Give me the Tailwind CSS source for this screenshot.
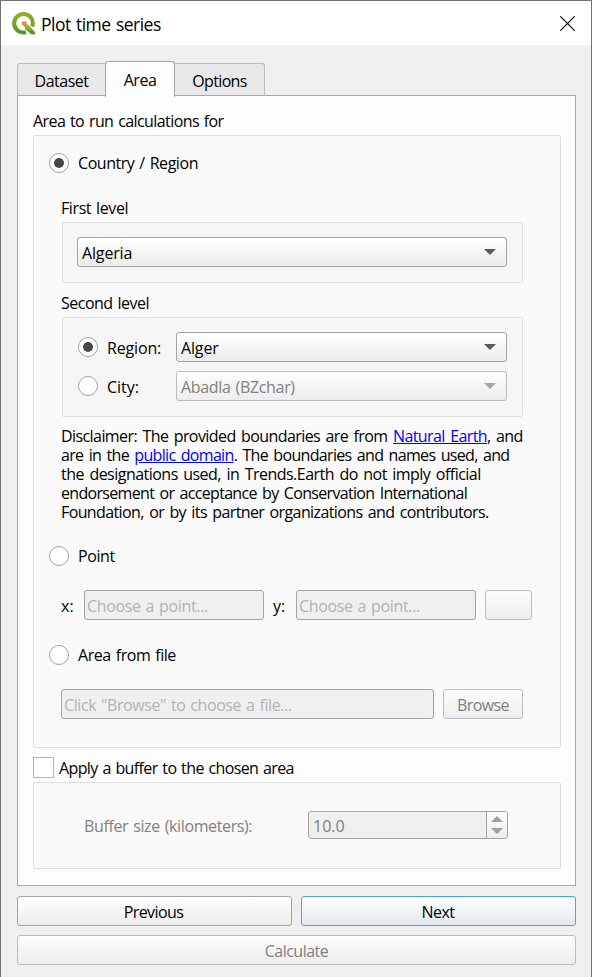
<!DOCTYPE html>
<html lang="en">
<head>
<meta charset="utf-8">
<title>Plot time series</title>
<script src="https://cdn.jsdelivr.net/npm/@tailwindcss/browser@4"></script>
</head>
<body class="h-[977px] w-[592px] overflow-hidden">
<div class="flex h-[977px] w-[592px] flex-col border-x border-t border-[#707070] bg-[#efefef] font-['Open_Sans',sans-serif] text-[16px] leading-[20px] tracking-[-0.5px] text-black [word-spacing:1.2px]">
  <header class="flex h-[44px] shrink-0 items-center bg-white pl-[11px] pr-[16px]">
    <svg class="h-[23px] w-[23px]" viewBox="0 0 23 23">
      <defs><linearGradient id="g" x1="0" y1="0" x2="0" y2="1"><stop offset="0" stop-color="#93b023"/><stop offset="1" stop-color="#589632"/></linearGradient></defs>
      <path d="M14 20.200A9.300 9.300 0 1 1 20.200 14.500" fill="none" stroke="url(#g)" stroke-width="4"/>
      <path d="M13 14l3.500-.5 6.500 6.500V22.500h-3.500L13 17z" fill="#589632"/>
      <path d="M13.500 13.500l3 0 3.500 3.500-2.500 2L13 16z" fill="#93b023"/>
      <path d="M10 9.500h4l.5 1.500 1.500 2-2.500 2.500-3.500-3z" fill="#ee8a33"/>
    </svg>
    <h1 class="ml-[6px] mt-[2px] text-[17.5px] font-normal tracking-[-0.5px]">Plot time series</h1>
    <svg class="ml-auto h-[15px] w-[15px]" viewBox="0 0 15 15"><path d="M.3.3l14.400 14.400M14.700.3L.3 14.700" stroke="#000" stroke-width="1.100"/></svg>
  </header>

  <nav class="relative z-10 -mb-px ml-4 mt-4 flex h-[36px] shrink-0 items-end">
    <div class="mb-px flex h-[33px] w-[88px] items-center justify-center rounded-tl-[3px] border border-r-0 border-[#bdbdbd] border-b-[#a8a8a8] bg-[#e8e8e8] pt-[3px]">Dataset</div>
    <div class="flex h-[36px] w-[70px] items-center justify-center rounded-t-[3px] border border-b-0 border-[#a8a8a8] bg-[#fdfdfd] pt-px">Area</div>
    <div class="mb-px flex h-[33px] w-[90px] items-center justify-center rounded-tr-[3px] border border-l-0 border-[#bdbdbd] border-b-[#a8a8a8] bg-[#e8e8e8] pt-[3px] tracking-[-0.65px]">Options</div>
  </nav>

  <main class="-mt-px ml-4 flex h-[791px] w-[559px] shrink-0 flex-col border border-[#a8a8a8] bg-[#fdfdfd] pl-[15px] pt-[15px]">
    <h2 class="h-[24px] tracking-[-0.58px]">Area to run calculations for</h2>
    <section class="h-[613px] w-[528px] shrink-0 rounded-[2px] border border-[#dedede] bg-[#fafafa]">
      <div class="mt-[17px] flex h-[20px] items-center pl-[15px]">
        <i class="flex size-[20px] items-center justify-center rounded-full border border-[#a3a3a3] bg-white"><b class="size-[10px] rounded-full bg-[#484848]"></b></i>
        <span class="ml-[9px] tracking-[-0.45px]">Country / Region</span>
      </div>
      <div class="ml-[27px] mt-[25px] h-[24px] tracking-[-0.4px]">First level</div>
      <div class="ml-[28px] h-[61px] w-[461px] rounded-[2px] border border-[#dedede] bg-[#f6f6f6] p-[14px]">
        <div class="flex h-[30px] w-[430px] items-center justify-between rounded-[3px] border border-[#a3a3a3] bg-linear-to-b from-white to-[#ececec] pl-[4px] pr-[10px] pt-[2px] tracking-[-0.15px]"><span>Algeria</span><svg class="mb-[3px] h-[6px] w-[12px]" viewBox="0 0 12 6"><path d="M0 0h12L6 6z" fill="#5c5c5c"/></svg></div>
      </div>
      <div class="ml-[27px] mt-[10px] h-[24px]">Second level</div>
      <div class="ml-[28px] h-[100px] w-[461px] rounded-[2px] border border-[#dedede] bg-[#f6f6f6] pl-[15px] pt-[14px]">
        <div class="flex h-[30px] items-center">
          <i class="flex size-[20px] items-center justify-center rounded-full border border-[#a3a3a3] bg-white"><b class="size-[10px] rounded-full bg-[#484848]"></b></i>
          <span class="ml-[9px] mt-[2px] w-[69px] tracking-[-0.15px]">Region:</span>
          <div class="flex h-[30px] w-[331px] items-center justify-between rounded-[3px] border border-[#a3a3a3] bg-linear-to-b from-white to-[#ececec] pl-[4px] pr-[10px] pt-[2px] tracking-[-0.15px]"><span>Alger</span><svg class="mb-[3px] h-[6px] w-[12px]" viewBox="0 0 12 6"><path d="M0 0h12L6 6z" fill="#5c5c5c"/></svg></div>
        </div>
        <div class="mt-[9px] flex h-[30px] items-center">
          <i class="size-[20px] rounded-full border border-[#a3a3a3] bg-white"></i>
          <span class="ml-[9px] mt-[2px] w-[69px] tracking-normal">City:</span>
          <div class="flex h-[30px] w-[331px] items-center justify-between rounded-[3px] border border-[#bdbdbd] bg-linear-to-b from-[#fdfdfd] to-[#ededed] pl-[4px] pr-[10px] pt-[2px] tracking-[-0.33px] text-[#808080]"><span>Abadla (BZchar)</span><svg class="mb-[3px] h-[6px] w-[12px]" viewBox="0 0 12 6"><path d="M0 0h12L6 6z" fill="#a5a5a5"/></svg></div>
        </div>
      </div>
      <div class="ml-[27px] mt-[10px] h-[95px] whitespace-nowrap leading-[19px] [word-spacing:1.8px]">
        <p class="tracking-[-0.58px]">Disclaimer: The provided boundaries are from <a class="text-[#0000ff] underline">Natural Earth</a>, and</p>
        <p class="tracking-[-0.67px]">are in the <a class="text-[#0000ff] underline">public domain</a>. The boundaries and names used, and</p>
        <p class="tracking-[-0.52px]">the designations used, in Trends.Earth do not imply official</p>
        <p class="tracking-[-0.68px]">endorsement or acceptance by Conservation International</p>
        <p class="tracking-[-0.61px]">Foundation, or by its partner organizations and contributors.</p>
      </div>
      <div class="mt-[24px] flex h-[20px] items-center pl-[15px]">
        <i class="size-[20px] rounded-full border border-[#a3a3a3] bg-white"></i><span class="ml-[9px] tracking-[-0.4px]">Point</span>
      </div>
      <div class="mt-[24px] flex h-[30px] items-center pl-[27px] tracking-[-0.36px]">
        <span class="mt-[2px] w-[23px] tracking-normal">x:</span>
        <div class="h-[30px] w-[180px] rounded-[3px] border border-[#a3a3a3] bg-[#efefef] pl-[2px] pt-[5px] text-[#b3b3b3]">Choose a point...</div>
        <span class="ml-[9px] mt-[2px] w-[23px] tracking-normal">y:</span>
        <div class="h-[30px] w-[180px] rounded-[3px] border border-[#a3a3a3] bg-[#efefef] pl-[2px] pt-[5px] text-[#b3b3b3]">Choose a point...</div>
        <div class="ml-[9px] h-[30px] w-[47px] rounded-[3px] border border-[#bdbdbd] bg-linear-to-b from-[#fdfdfd] to-[#ededed]"></div>
      </div>
      <div class="mt-[25px] flex h-[20px] items-center pl-[15px]">
        <i class="size-[20px] rounded-full border border-[#a3a3a3] bg-white"></i><span class="ml-[9px] tracking-[-0.44px]">Area from file</span>
      </div>
      <div class="mt-[24px] flex h-[30px] pl-[27px]">
        <div class="h-[30px] w-[373px] rounded-[3px] border border-[#a3a3a3] bg-[#efefef] pl-[2px] pt-[5px] tracking-[-0.42px] text-[#b3b3b3]">Click "Browse" to choose a file...</div>
        <div class="ml-[9px] h-[30px] w-[80px] rounded-[3px] border border-[#bdbdbd] bg-linear-to-b from-[#fdfdfd] to-[#ededed] pt-[5px] text-center tracking-[-0.6px] text-[#808080]">Browse</div>
      </div>
    </section>
    <div class="mt-[9px] flex h-[25px] shrink-0">
      <i class="size-[21px] border border-[#b5b5b5] bg-white"></i><span class="ml-[5px] mt-px tracking-[-0.62px]">Apply a buffer to the chosen area</span>
    </div>
    <section class="flex h-[87px] w-[528px] shrink-0 rounded-[2px] border border-[#dedede] bg-[#fafafa] pl-[50px] pt-[28px] text-[#808080]">
      <span class="w-[224px] pt-[5px] tracking-[-0.38px]">Buffer size (kilometers):</span>
      <div class="flex h-[28px] w-[200px] overflow-hidden rounded-[3px] border border-[#a3a3a3] bg-[#efefef]">
        <span class="w-[177px] pl-[4px] pt-[4px] tracking-normal">10.0</span>
        <span class="flex w-[21px] items-center justify-center border-l border-[#a3a3a3] bg-linear-to-b from-[#fdfdfd] to-[#ededed]"><svg class="h-[18px] w-[12px]" viewBox="0 0 12 18"><path d="M0 6h12L6 0zM0 12h12l-6 6z" fill="#a0a0a0"/></svg></span>
      </div>
    </section>
  </main>
  <footer class="ml-4 mt-[10px] flex w-[559px] flex-wrap gap-[9px] text-center">
    <div class="h-[30px] w-[275px] rounded-[3px] border border-[#a3a3a3] bg-linear-to-b from-white to-[#ececec] pr-[2px] pt-[5px] tracking-[-0.6px]">Previous</div>
    <div class="h-[30px] w-[275px] rounded-[3px] border border-[#43a6f5] bg-linear-to-b from-white to-[#e2e8ee] pr-px pt-[5px]">Next</div>
    <div class="h-[30px] w-[559px] rounded-[3px] border border-[#bdbdbd] bg-linear-to-b from-[#fdfdfd] to-[#ededed] pt-[5px] text-[#808080]">Calculate</div>
  </footer>
</div>
</body>
</html>
